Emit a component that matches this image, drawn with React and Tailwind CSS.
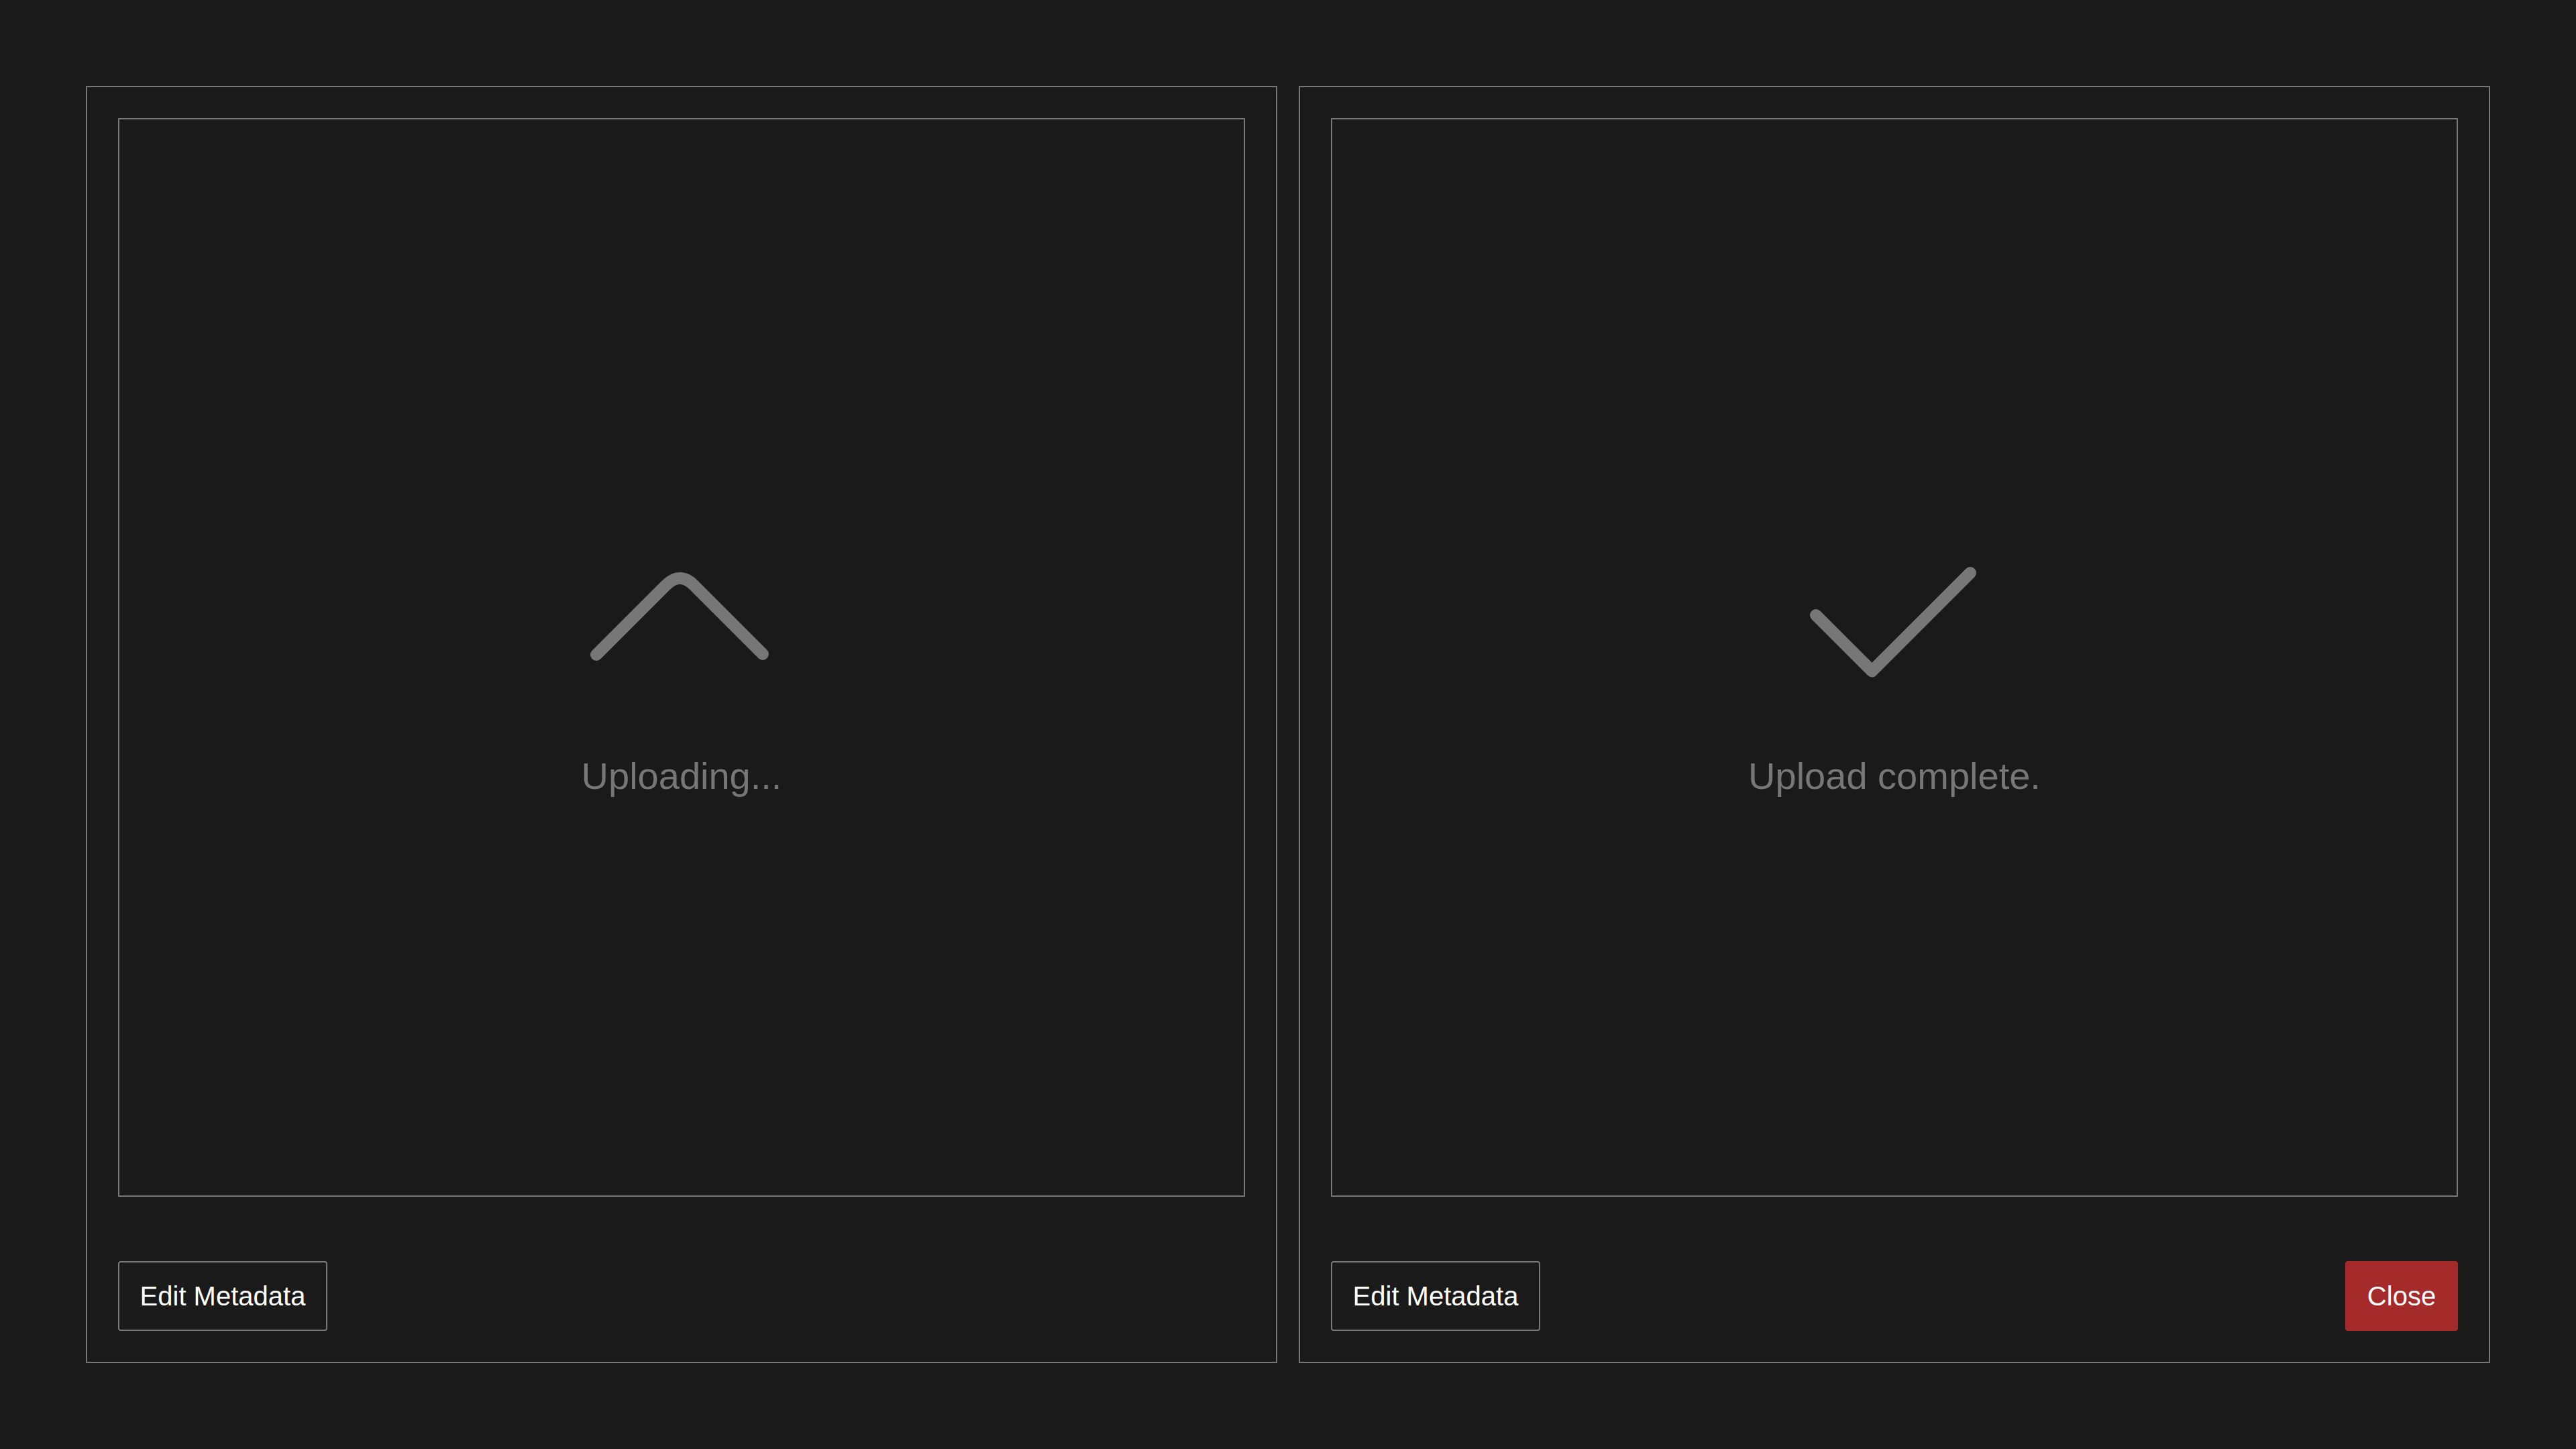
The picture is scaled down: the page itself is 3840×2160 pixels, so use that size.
import React from "react";

const ChevronUp = () => (
  <svg width="320" height="320" viewBox="0 0 320 320" fill="none">
    <path
      d="M33 205 L136.5 101.5 Q157.5 80.5 178.5 101.5 L281 204"
      stroke="#777777"
      strokeWidth="18"
      strokeLinecap="round"
      strokeLinejoin="round"
    />
  </svg>
);

const Check = () => (
  <svg width="320" height="320" viewBox="0 0 320 320" fill="none">
    <path
      d="M43 146 L126.5 229.5 L273 83"
      stroke="#777777"
      strokeWidth="18"
      strokeLinecap="round"
      strokeLinejoin="round"
    />
  </svg>
);

const UploadPanel = ({ icon, label, showClose }) => (
  <div className="flex-1 flex flex-col border-2 border-[#777777] p-[46px]">
    {/* preview area */}
    <div className="flex-1 border-2 border-[#777777] flex flex-col items-center justify-center">
      <div className="flex flex-col items-center gap-[34px]">
        {icon}
        <p className="text-[56px] leading-[64px] text-[#777777]">{label}</p>
      </div>
    </div>

    <div className="mt-[96px] h-[104px] flex items-center justify-between">
      <button className="h-[104px] w-[312px] border-2 border-[#777777] rounded-[4px] bg-[#1a1a1a] text-white text-[40px] flex items-center justify-center">
        Edit Metadata
      </button>
      {showClose && (
        <button className="h-[104px] w-[168px] border-2 border-[#a52a2a] rounded-[4px] bg-[#a52a2a] text-white text-[40px] flex items-center justify-center">
          Close
        </button>
      )}
    </div>
  </div>
);

const App = () => {
  return (
    <div
      className="h-[2160px] w-[3840px] bg-[#1a1a1a] p-[128px] flex gap-8"
      style={{ fontFamily: '"Liberation Sans", Arial, sans-serif' }}
    >
      <UploadPanel icon={<ChevronUp />} label="Uploading..." />
      <UploadPanel icon={<Check />} label="Upload complete." showClose />
    </div>
  );
};

export default App;
